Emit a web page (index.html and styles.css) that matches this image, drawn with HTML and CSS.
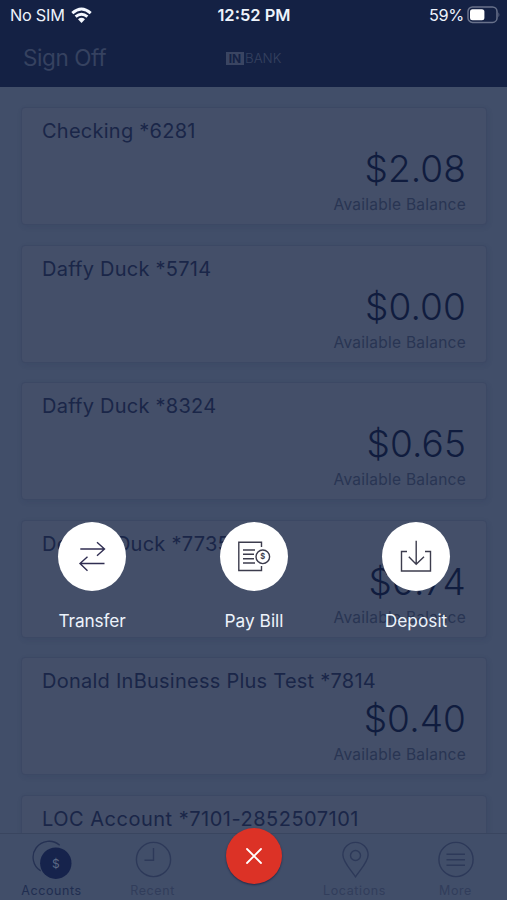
FILE: index.html
```html
<!DOCTYPE html>
<html lang="en">
<head>
<meta charset="utf-8">
<title>Accounts</title>
<link rel="stylesheet" href="styles.css">
</head>
<body>
<div class="phone">
  <header class="header">
    <div class="status">
      <div class="carrier"><span class="sim">No SIM</span>
        <svg width="21" height="17" viewBox="0 0 21 17" fill="none" stroke="#f4f8ff" stroke-width="2.9"><path d="M1.3 6.2Q10.5-2 19.7 6.2M4.6 9.7Q10.5 4.6 16.4 9.7"/><path d="M7 12.3Q10.5 9.4 14 12.3L10.5 16Z" fill="#f4f8ff" stroke="none"/></svg>
      </div>
      <div class="time">12:52 PM</div>
      <div class="power"><span class="percent">59%</span>
        <svg width="33" height="18" viewBox="0 0 33 18"><rect x="1" y="1" width="29" height="15.4" rx="4.5" fill="none" stroke="#69728b" stroke-width="1.5"/><rect x="3" y="3.2" width="14.4" height="11" rx="2.5" fill="#fff"/><path d="M31.5 6.2Q33.2 8.7 31.5 11.2Z" fill="#69728b"/></svg>
      </div>
    </div>
    <nav class="nav">
      <span class="signoff">Sign Off</span>
      <span class="logo"><span class="logo-in">IN</span><span class="logo-bank">BANK</span></span>
    </nav>
  </header>

  <main class="accounts">
    <section class="card"><h2 class="name">Checking *6281</h2><p class="amount">$2.08</p><p class="caption">Available Balance</p></section>
    <section class="card"><h2 class="name">Daffy Duck *5714</h2><p class="amount">$0.00</p><p class="caption">Available Balance</p></section>
    <section class="card"><h2 class="name">Daffy Duck *8324</h2><p class="amount">$0.65</p><p class="caption">Available Balance</p></section>
    <section class="card"><h2 class="name">Donald Duck *7735</h2><p class="amount">$0.74</p><p class="caption">Available Balance</p></section>
    <section class="card"><h2 class="name">Donald InBusiness Plus Test *7814</h2><p class="amount">$0.40</p><p class="caption">Available Balance</p></section>
    <section class="card"><h2 class="name wide">LOC Account *7101-2852507101</h2></section>
  </main>

  <footer class="tabs">
    <div class="tab active">
      <svg width="42" height="40" viewBox="0 0 42 40" fill="none" stroke="#253153" stroke-width="1.3"><path d="M28.7 5.3A16 16 0 1 0 9.7 30.9"/><circle cx="24.8" cy="23.2" r="15.7" fill="#16234c" stroke="none"/><text class="coin" x="24.8" y="27.8">$</text></svg>
      <span>Accounts</span>
    </div>
    <div class="tab">
      <svg width="42" height="40" viewBox="0 0 42 40" fill="none" stroke="#2d3959" stroke-width="1.4"><circle cx="21.5" cy="19.5" r="17.1"/><path d="M21.5 8V20.2H12.5"/></svg>
      <span>Recent</span>
    </div>
    <div class="tab"></div>
    <div class="tab">
      <svg width="42" height="40" viewBox="0 0 42 40" fill="none" stroke="#2d3959" stroke-width="1.4"><path d="M21.5 36.8C17 30 8.9 22 8.9 15A12.6 12.6 0 0 1 34.1 15C34.1 22 26 30 21.5 36.8Z"/><circle cx="21.5" cy="15.5" r="5"/></svg>
      <span>Locations</span>
    </div>
    <div class="tab">
      <svg width="42" height="40" viewBox="0 0 42 40" fill="none" stroke="#2d3959" stroke-width="1.4"><circle cx="21" cy="19.5" r="17.1"/><path d="M11.5 14.3H30M11.5 19.7H30M11.5 25.2H30"/></svg>
      <span>More</span>
    </div>
  </footer>

  <div class="actions">
    <div class="action">
      <div class="disc"><svg width="68" height="68" viewBox="0 0 68 68" fill="none" stroke="#302e52" stroke-width="1.4"><path d="M22.3 27H46.5M39 20.2L46.5 27L39 33.8M46.5 41.5H22M29.5 34.8L22 41.5L29.5 48.8"/></svg></div>
      <span class="transfer">Transfer</span>
    </div>
    <div class="action">
      <div class="disc"><svg width="68" height="68" viewBox="0 0 68 68" fill="none" stroke="#3c3c4d" stroke-width="1.4"><path d="M41.5 25V20.3H18.8V48.5H41.5V44M23 28H35M23 32.2H34M23 36.8H34M23 41H35"/><circle cx="42.8" cy="34.8" r="6.8"/><text class="bill-sign" x="42.8" y="37.4">$</text></svg></div>
      <span>Pay Bill</span>
    </div>
    <div class="action">
      <div class="disc"><svg width="68" height="68" viewBox="0 0 68 68" fill="none" stroke="#3c3c4d" stroke-width="1.4"><path d="M25 29.5H19.5V49H48.5V29.5H43M34.2 18.8V42.2M26.8 34.8L34.2 42.2L42 34.8"/></svg></div>
      <span>Deposit</span>
    </div>
  </div>
  <div class="close"><svg width="20" height="20" viewBox="0 0 20 20" stroke="#fff" stroke-width="1.8" stroke-linecap="round"><path d="M3 3L17 17M17 3L3 17"/></svg></div>
</div>
</body>
</html>
```
FILE: styles.css
```css
* { box-sizing: border-box; }
body { margin: 0; font-family: Inter, "Liberation Sans", sans-serif; }
svg { display: block; flex: none; }
p, h2 { margin: 0; white-space: nowrap; }
.phone { position: relative; width: 507px; height: 900px; overflow: hidden; background: #414e69; display: flex; flex-direction: column; }
.header { flex: none; height: 87px; background: #142144; }
.status { display: grid; grid-template-columns: 1fr auto 1fr; align-items: center; height: 30px; padding: 0 9px 0 10px; color: #edf3fb; font-size: 16.5px; line-height: 30px; }
.carrier { display: flex; align-items: center; gap: 6px; }
.sim { font-size: 16.3px; letter-spacing: -0.25px; }
.time { font-weight: 600; font-size: 16.5px; }
.power { display: flex; justify-content: flex-end; align-items: center; gap: 3px; margin-right: -2px; }
.percent { font-size: 16.3px; letter-spacing: -0.3px; }
.nav { display: grid; grid-template-columns: 203px 1fr; align-items: center; height: 56px; padding-left: 23px; color: #364260; }
.signoff { margin-top: -2px; font-size: 22.5px; letter-spacing: -0.4px; }
.logo { display: flex; align-items: center; }
.logo-in { width: 18px; height: 13px; background: #3a4562; color: #142144; font-size: 12px; line-height: 13px; font-weight: 700; text-align: center; }
.logo-bank { margin-left: 1px; font-size: 13.3px; font-weight: 300; }
.accounts { flex: 1; min-height: 0; overflow: hidden; padding: 20px 20px 0 21px; display: flex; flex-direction: column; gap: 19.6px; }
.card { flex: none; height: 118px; padding: 11px 20px 0 20px; border: 1px solid #3c4864; border-radius: 4px; background: #444f69; box-shadow: 1px 2px 5px rgba(38, 50, 82, 0.14); color: #101c3e; }
.name { font-size: 20px; line-height: 24px; font-weight: 400; letter-spacing: 0.25px; color: #1a2648; }
.name.wide { letter-spacing: 0.5px; }
.amount { height: 44px; margin-top: 4px; font-size: 37px; line-height: 44px; font-weight: 350; letter-spacing: 0.1px; text-align: right; }
.caption { margin-top: 4px; font-size: 15.5px; line-height: 20px; letter-spacing: 0.25px; text-align: right; color: #293553; }
.tabs { flex: none; height: 67px; border-top: 1px solid #39455f; background: #414e69; display: grid; grid-template-columns: repeat(5, 101px); justify-content: center; }
.tab { display: flex; flex-direction: column; align-items: center; padding-top: 6px; font-size: 12.5px; line-height: 15px; letter-spacing: 0.6px; color: #313d5b; }
.tab span { margin-top: 3px; }
.tab.active { color: #202d50; }
.coin { font-size: 12px; letter-spacing: 0; text-anchor: middle; fill: #5d6984; stroke: none; }
.actions { position: absolute; left: 11px; top: 522px; display: grid; grid-template-columns: repeat(3, 162px); }
.action { display: flex; flex-direction: column; align-items: center; gap: 18px; color: #edf3fb; font-size: 17.3px; line-height: 24px; }
.transfer { letter-spacing: -0.15px; }
.disc { width: 68px; height: 69px; border-radius: 50%; background: #fff; }
.bill-sign { font-size: 7.5px; font-weight: 700; text-anchor: middle; fill: #3c3c4d; stroke: none; }
.close { position: absolute; left: 226px; top: 828px; width: 56px; height: 56px; border-radius: 50%; background: #dc3226; display: flex; align-items: center; justify-content: center; box-shadow: 0 1px 2px #202b4b; }
```
